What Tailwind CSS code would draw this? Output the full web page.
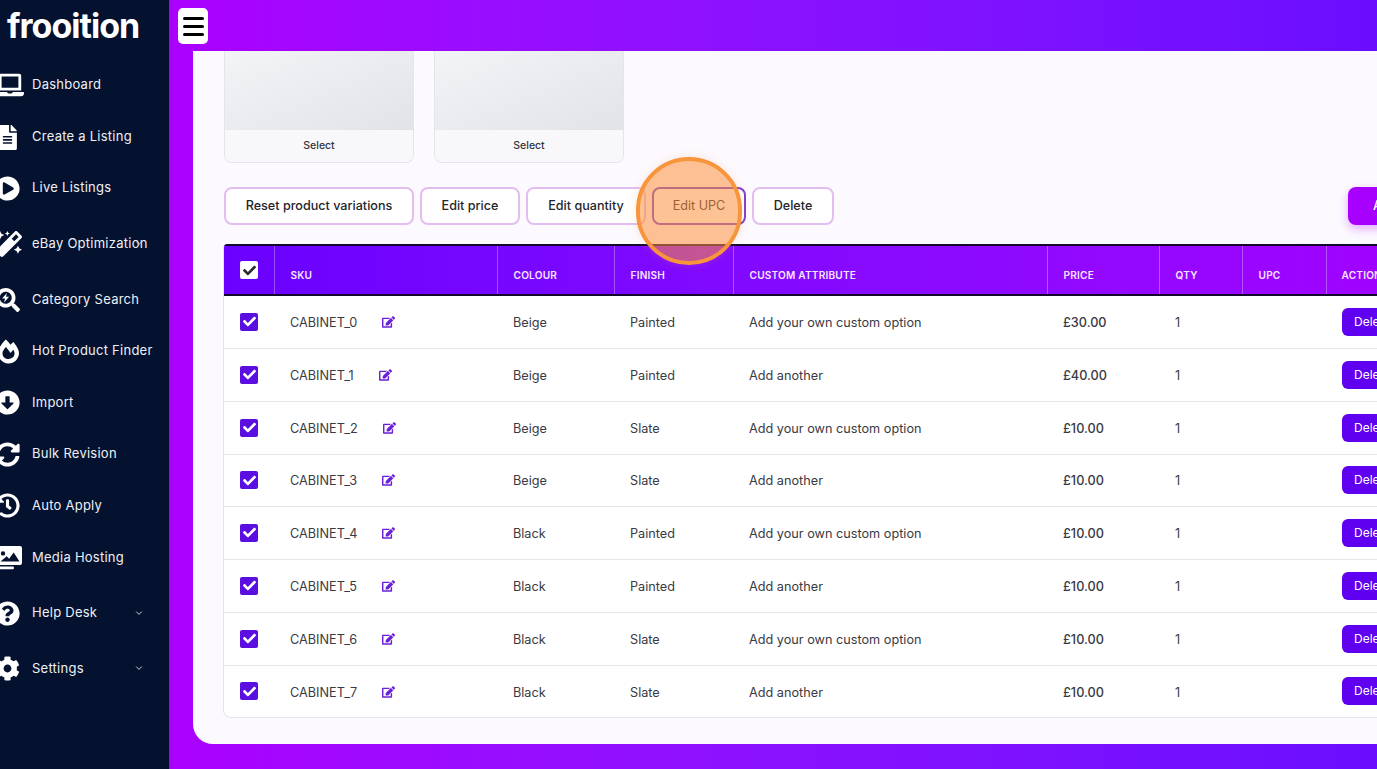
<!DOCTYPE html>
<html lang="en">
<head>
  <meta charset="UTF-8" />
  <meta name="viewport" content="width=device-width, initial-scale=1.0"/>
  <title>Product variations - Frooition</title>
  <script src="https://cdn.jsdelivr.net/npm/@tailwindcss/browser@4"></script>
</head>
<body class="h-screen overflow-hidden bg-[#04122f] font-['Inter',sans-serif]">
  <svg class="hidden">
    <symbol id="edit" viewBox="0 0 576 512"><path fill="currentColor" d="M402.6 83.2l90.2 90.2c3.8 3.8 3.8 10 0 13.8L274.4 405.6l-92.8 10.3c-12.4 1.4-22.9-9.1-21.5-21.5l10.3-92.8L388.8 83.2c3.8-3.8 10-3.8 13.8 0zm162-22.9l-48.8-48.8c-15.2-15.2-39.9-15.2-55.2 0l-35.4 35.4c-3.8 3.8-3.8 10 0 13.8l90.2 90.2c3.8 3.8 10 3.8 13.8 0l35.4-35.4c15.2-15.3 15.2-40 0-55.2zM384 346.2V448H64V128h229.8c3.2 0 6.2-1.3 8.5-3.5l40-40c7.6-7.6 2.2-20.5-8.5-20.5H48C21.5 64 0 85.5 0 112v352c0 26.5 21.5 48 48 48h352c26.5 0 48-21.5 48-48V306.2c0-10.7-12.9-16-20.5-8.5l-40 40c-2.2 2.3-3.5 5.3-3.5 8.5z"/></symbol>
    <symbol id="check" viewBox="0 0 512 512"><path fill="currentColor" d="M173.898 439.404l-166.4-166.4c-9.997-9.997-9.997-26.206 0-36.204l36.203-36.204c9.997-9.998 26.207-9.998 36.204 0L192 312.69 432.095 72.596c9.997-9.997 26.207-9.997 36.204 0l36.203 36.204c9.997 9.997 9.997 26.206 0 36.204l-294.4 294.401c-9.998 9.997-26.207 9.997-36.204-.001z"/></symbol>
    <symbol id="chev" viewBox="0 0 10 10"><path d="M1.5 3.2 5 6.8l3.5-3.6" fill="none" stroke="currentColor" stroke-width="1.2"/></symbol>
  </svg>

  <div class="flex h-full">
    <!-- sidebar -->
    <aside class="w-[169px] shrink-0 overflow-hidden bg-[#04122f] text-white">
      <div class="h-[59px] pl-[7px] pt-[6px] text-[34px] leading-[40px] font-bold tracking-[-1px]">frooition</div>
      <nav class="text-[13px] tracking-[0.25px] text-[#eef0f6]">
        <a class="relative flex h-[52px] items-center"><span class="w-[32px] shrink-0"><svg class="-ml-[4px] w-[28px] h-[24px]" viewBox="0 0 640 512"><path fill="#fff" d="M624 416H381.54c-.74 19.81-14.71 32-32.74 32H288c-18.69 0-33.02-17.47-32.77-32H16c-8.8 0-16 7.2-16 16v16c0 35.2 28.8 64 64 64h512c35.2 0 64-28.8 64-64v-16c0-8.8-7.2-16-16-16zM576 48c0-26.4-21.6-48-48-48H112C85.6 0 64 21.6 64 48v336h512V48zm-64 272H128V64h384v256z"/></svg></span>Dashboard</a>
        <a class="relative flex h-[52px] items-center"><span class="w-[32px] shrink-0"><svg class="-ml-[2px] w-[19px] h-[25px]" viewBox="0 0 384 512"><path fill="#fff" d="M224 136V0H24C10.7 0 0 10.7 0 24v464c0 13.3 10.7 24 24 24h336c13.3 0 24-10.7 24-24V160H248c-13.2 0-24-10.8-24-24zm64 236c0 6.6-5.4 12-12 12H108c-6.6 0-12-5.4-12-12v-8c0-6.6 5.4-12 12-12h168c6.6 0 12 5.4 12 12v8zm0-64c0 6.6-5.4 12-12 12H108c-6.6 0-12-5.4-12-12v-8c0-6.6 5.4-12 12-12h168c6.6 0 12 5.4 12 12v8zm0-72v8c0 6.6-5.4 12-12 12H108c-6.6 0-12-5.4-12-12v-8c0-6.6 5.4-12 12-12h168c6.6 0 12 5.4 12 12zm96-114.1v6.1H256V0h6.1c6.4 0 12.5 2.5 17 7l97.9 98c4.5 4.5 7 10.6 7 16.9z"/></svg></span>Create a Listing</a>
        <a class="relative flex h-[50px] items-center"><span class="w-[32px] shrink-0"><svg class="-ml-[5px] w-[25px] h-[25px]" viewBox="0 0 512 512"><path fill="#fff" d="M256 8C119 8 8 119 8 256s111 248 248 248 248-111 248-248S393 8 256 8zm115.7 272l-176 101c-15.8 8.8-35.7-2.5-35.7-21V152c0-18.4 19.8-29.8 35.7-21l176 107c16.4 9.2 16.4 32.9 0 42z"/></svg></span>Live Listings</a>
        <a class="relative flex h-[61px] items-center"><span class="w-[32px] shrink-0"><svg class="-ml-[4px] w-[26px] h-[26px]" viewBox="0 0 512 512"><path fill="#fff" d="M224 96l16-32 32-16-32-16-16-32-16 32-32 16 32 16 16 32zM80 160l26.66-53.33L160 80l-53.34-26.67L80 0 53.34 53.33 0 80l53.34 26.67L80 160zm352 128l-26.66 53.33L352 368l53.34 26.67L432 448l26.66-53.33L512 368l-53.34-26.67L432 288zm70.62-193.77L417.77 9.38C411.53 3.12 403.34 0 395.15 0c-8.19 0-16.38 3.12-22.63 9.38L9.38 372.52c-12.5 12.5-12.5 32.76 0 45.25l84.85 84.85c6.25 6.25 14.44 9.37 22.62 9.37 8.19 0 16.38-3.12 22.63-9.37l363.14-363.15c12.5-12.48 12.5-32.75 0-45.24zM359.45 203.46l-50.91-50.91 86.6-86.6 50.91 50.91-86.6 86.6z"/></svg></span>eBay Optimization<svg class="absolute left-[135px] top-[26px] w-[8px] h-[8px] text-[#cfd3de]"><use href="#chev"/></svg></a>
        <a class="relative flex h-[52px] items-center"><span class="w-[32px] shrink-0"><svg class="-ml-[4px] w-[24px] h-[24px]" viewBox="0 0 512 512"><path fill="#fff" d="M505 442.7L405.3 343c-4.5-4.5-10.6-7-17-7H372c27.6-35.3 44-79.7 44-128C416 93.1 322.9 0 208 0S0 93.1 0 208s93.1 208 208 208c48.3 0 92.7-16.4 128-44v16.3c0 6.4 2.5 12.5 7 17l99.7 99.7c9.4 9.4 24.6 9.4 33.9 0l28.3-28.3c9.4-9.4 9.4-24.6.1-34zM208 336c-70.7 0-128-57.2-128-128 0-70.7 57.2-128 128-128 70.7 0 128 57.2 128 128 0 70.7-57.2 128-128 128z"/><path fill="#fff" d="M232 105 130 225h62l-18 84 104-124h-64z"/></svg></span>Category Search</a>
        <a class="relative flex h-[50px] items-center"><span class="w-[32px] shrink-0"><svg class="-ml-[2px] w-[21px] h-[25px]" viewBox="0 0 448 512"><path fill="#fff" d="M323.56 51.2c-20.8 19.3-39.58 39.59-56.22 59.97C240.08 73.62 206.28 35.53 168 0 69.74 91.17 0 209.96 0 281.6 0 408.85 100.29 512 224 512s224-103.15 224-230.4c0-53.27-51.98-163.14-124.44-230.4zm-19.47 340.65C282.43 407.01 255.72 416 226.86 416 154.71 416 96 368.26 96 290.75c0-38.61 24.31-72.63 72.79-130.75 6.93 7.98 98.83 125.34 98.83 125.34l58.63-66.88c4.14 6.85 7.91 13.55 11.27 19.97 27.35 52.19 15.81 118.97-33.43 153.42z"/></svg></span>Hot Product Finder</a>
        <a class="relative flex h-[53px] items-center"><span class="w-[32px] shrink-0"><svg class="-ml-[5px] w-[25px] h-[25px]" viewBox="0 0 512 512"><path fill="#fff" d="M504 256c0 137-111 248-248 248S8 393 8 256 119 8 256 8s248 111 248 248zM212 140v116h-70.9c-10.7 0-16.1 13-8.5 20.5l114.9 114.3c4.7 4.7 12.2 4.7 16.9 0l114.9-114.3c7.6-7.6 2.2-20.5-8.5-20.5H300V140c0-6.6-5.4-12-12-12h-64c-6.6 0-12 5.4-12 12z"/></svg></span>Import</a>
        <a class="relative flex h-[50px] items-center"><span class="w-[32px] shrink-0"><svg class="-ml-[5px] w-[25px] h-[25px]" viewBox="0 0 512 512"><path fill="#fff" d="M370.72 133.28C339.458 104.008 298.888 87.962 255.848 88c-77.458.068-144.328 53.178-162.791 126.85-1.344 5.363-6.122 9.15-11.651 9.15H24.103c-7.498 0-13.194-6.807-11.807-14.176C33.933 94.924 134.813 8 256 8c66.448 0 126.791 26.136 171.315 68.685L463.03 40.97C478.149 25.851 504 36.559 504 57.941V192c0 13.255-10.745 24-24 24H345.941c-21.382 0-32.09-25.851-16.971-40.971l41.75-41.749zM32 296h134.059c21.382 0 32.09 25.851 16.971 40.971l-41.75 41.75c31.262 29.273 71.835 45.319 114.876 45.28 77.418-.07 144.315-53.144 162.787-126.849 1.344-5.363 6.122-9.15 11.651-9.15h57.304c7.498 0 13.194 6.807 11.807 14.176C478.067 417.076 377.187 504 256 504c-66.448 0-126.791-26.136-171.315-68.685L48.97 471.03C33.851 486.149 8 475.441 8 454.059V320c0-13.255 10.745-24 24-24z"/></svg></span>Bulk Revision</a>
        <a class="relative flex h-[53px] items-center"><span class="w-[32px] shrink-0"><svg class="-ml-[5px] w-[25px] h-[25px]" viewBox="0 0 512 512"><path fill="#fff" d="M504 255.531c.253 136.64-111.18 248.372-247.82 248.468-59.015.042-113.223-20.53-155.822-54.911-11.077-8.94-11.905-25.541-1.839-35.607l11.267-11.267c8.609-8.609 22.353-9.551 31.891-1.984C173.062 425.135 212.781 440 256 440c101.705 0 184-82.311 184-184 0-101.705-82.311-184-184-184-48.814 0-93.149 18.969-126.068 49.932l50.754 50.754c10.08 10.08 2.941 27.314-11.313 27.314H24c-8.837 0-16-7.163-16-16V38.627c0-14.254 17.234-21.393 27.314-11.314l49.372 49.372C129.209 34.136 189.552 8 256 8c136.81 0 247.747 110.78 248 247.531zm-180.912 78.784l9.823-12.63c8.138-10.463 6.253-25.542-4.21-33.679L288 256.349V152c0-13.255-10.745-24-24-24h-16c-13.255 0-24 10.745-24 24v135.651l65.409 50.874c10.463 8.137 25.541 6.253 33.679-4.21z"/></svg></span>Auto Apply</a>
        <a class="relative flex h-[52px] items-center"><span class="w-[32px] shrink-0"><svg class="-ml-[3px] w-[26px] h-[24px]" viewBox="0 0 26 24"><path fill="#fff" fill-rule="evenodd" d="M3 0h20a2 2 0 0 1 2 2v15a2 2 0 0 1-2 2H3a2 2 0 0 1-2-2V2a2 2 0 0 1 2-2zm3 5.2a2.2 2.2 0 1 0 0 4.4 2.2 2.2 0 0 0 0-4.4zM3.5 15.5h19l-5.8-9-4.6 6.2-2.4-2.4z"/><rect fill="#fff" x="0" y="20.5" width="17" height="2.8" rx="1.2"/></svg></span>Media Hosting</a>
        <a class="relative flex h-[58px] items-center"><span class="w-[32px] shrink-0"><svg class="-ml-[5px] w-[25px] h-[25px]" viewBox="0 0 512 512"><path fill="#fff" d="M504 256c0 136.997-111.043 248-248 248S8 392.997 8 256C8 119.083 119.043 8 256 8s248 111.083 248 248zM262.655 90c-54.497 0-89.255 22.957-116.549 63.758-3.536 5.286-2.353 12.415 2.715 16.258l34.699 26.31c5.205 3.947 12.621 3.008 16.665-2.122 17.864-22.658 30.113-35.797 57.303-35.797 20.429 0 45.698 13.148 45.698 32.958 0 14.976-12.363 22.667-32.534 33.976C247.128 238.528 216 254.941 216 296v4c0 6.627 5.373 12 12 12h56c6.627 0 12-5.373 12-12v-1.333c0-28.462 83.186-29.647 83.186-106.667 0-58.002-60.165-102-116.531-102zM256 338c-25.365 0-46 20.635-46 46 0 25.364 20.635 46 46 46s46-20.636 46-46c0-25.365-20.635-46-46-46z"/></svg></span>Help Desk<svg class="absolute left-[135px] top-[25px] w-[8px] h-[8px] text-[#cfd3de]"><use href="#chev"/></svg></a>
        <a class="relative flex h-[53px] items-center"><span class="w-[32px] shrink-0"><svg class="-ml-[5px] w-[25px] h-[25px]" viewBox="0 0 512 512"><path fill="#fff" d="M487.4 315.7l-42.6-24.6c4.3-23.2 4.3-47 0-70.2l42.6-24.6c4.9-2.8 7.1-8.6 5.5-14-11.1-35.6-30-67.8-54.7-94.6-3.8-4.1-10-5.1-14.8-2.3L380.8 110c-17.9-15.4-38.5-27.3-60.8-35.1V25.8c0-5.6-3.9-10.5-9.4-11.7-36.7-8.2-74.3-7.8-109.2 0-5.5 1.2-9.4 6.1-9.4 11.7V75c-22.2 7.9-42.8 19.8-60.8 35.1L88.7 85.5c-4.9-2.8-11-1.9-14.8 2.3-24.7 26.7-43.6 58.9-54.7 94.6-1.7 5.4.6 11.2 5.5 14L67.3 221c-4.3 23.2-4.3 47 0 70.2l-42.6 24.6c-4.9 2.8-7.1 8.6-5.5 14 11.1 35.6 30 67.8 54.7 94.6 3.8 4.1 10 5.1 14.8 2.3l42.6-24.6c17.9 15.4 38.5 27.3 60.8 35.1v49.2c0 5.6 3.9 10.5 9.4 11.7 36.7 8.2 74.3 7.8 109.2 0 5.5-1.2 9.4-6.1 9.4-11.7v-49.2c22.2-7.9 42.8-19.8 60.8-35.1l42.6 24.6c4.9 2.8 11 1.9 14.8-2.3 24.7-26.7 43.6-58.9 54.7-94.6 1.5-5.5-.7-11.3-5.6-14.1zM256 336c-44.1 0-80-35.9-80-80s35.9-80 80-80 80 35.9 80 80-35.9 80-80 80z"/></svg></span>Settings<svg class="absolute left-[135px] top-[22px] w-[8px] h-[8px] text-[#cfd3de]"><use href="#chev"/></svg></a>
      </nav>
    </aside>

    <!-- right side -->
    <div class="flex min-w-0 flex-1 flex-col bg-linear-to-r from-[#aa00ff] to-[#6a0dff]">
      <header class="h-[51px] shrink-0 pl-[9px] pt-[8px]">
        <button class="flex h-[36px] w-[30px] flex-col items-center justify-center gap-[5px] rounded-[5px] bg-white">
          <span class="h-[3px] w-[21px] rounded-full bg-black"></span>
          <span class="h-[3px] w-[21px] rounded-full bg-black"></span>
          <span class="h-[3px] w-[21px] rounded-full bg-black"></span>
        </button>
      </header>

      <main class="relative ml-[24px] mb-[25px] min-h-0 flex-1 overflow-hidden rounded-bl-[20px] bg-[#fcf9ff] pl-[31px]">
        <!-- image tiles, scrolled under the header -->
        <div class="flex gap-[20px]">
          <div class="w-[190px] overflow-hidden rounded-b-[8px] border border-t-0 border-[#e4e4ea]">
            <div class="h-[79px] bg-linear-to-br from-[#f3f4f6] to-[#e1e3e8]"></div>
            <div class="flex h-[32px] items-center justify-center bg-[#f8f8fb] text-[10.5px] font-medium text-[#33333a]">Select</div>
          </div>
          <div class="w-[190px] overflow-hidden rounded-b-[8px] border border-t-0 border-[#e4e4ea]">
            <div class="h-[79px] bg-linear-to-br from-[#f3f4f6] to-[#e1e3e8]"></div>
            <div class="flex h-[32px] items-center justify-center bg-[#f8f8fb] text-[10.5px] font-medium text-[#33333a]">Select</div>
          </div>
        </div>

        <!-- actions -->
        <div class="mt-[24px] flex w-[1254px] gap-[6px] text-[12.6px] font-medium text-[#25252b]">
          <button class="h-[38px] w-[190px] rounded-[8px] border-2 border-[#e4bdf0] bg-white">Reset product variations</button>
          <button class="h-[38px] w-[100px] rounded-[8px] border-2 border-[#e4bdf0] bg-white">Edit price</button>
          <button class="h-[38px] w-[120px] rounded-[8px] border-2 border-[#e4bdf0] bg-white">Edit quantity</button>
          <button class="h-[38px] w-[94px] rounded-[8px] border-2 border-[#7d3fd0] bg-white font-normal">Edit UPC</button>
          <button class="h-[38px] w-[82px] rounded-[8px] border-2 border-[#e4bdf0] bg-white">Delete</button>
          <button class="ml-auto h-[38px] w-[130px] rounded-[8px] bg-[#a800ff] text-white shadow-[0_4px_10px_rgba(168,0,255,0.3)]">Add variation</button>
        </div>

        <!-- variations table -->
        <div class="mt-[19px] -ml-[1px] w-[1254px] overflow-hidden rounded-b-[8px] rounded-t-[4px] border-x border-b border-[#e4e4ea] bg-white">
          <table class="w-full table-fixed border-collapse text-left text-[12.7px] text-[#3a3a42]">
            <colgroup>
              <col class="w-[50px]"><col class="w-[223px]"><col class="w-[117px]"><col class="w-[119px]"><col class="w-[314px]"><col class="w-[112px]"><col class="w-[83px]"><col class="w-[84px]"><col>
            </colgroup>
            <thead class="bg-linear-to-r from-[#6a00ff] to-[#a400ff] text-[10.1px] font-semibold tracking-[0.2px] text-[#f4e6ff] uppercase">
              <tr class="h-[50px] border-y-2 border-[#14082e]">
                <th class="border-r border-white/30 pl-[16px]"><span class="flex h-[18px] w-[18px] items-center justify-center rounded-[2px] bg-white text-[#2b2b33]"><svg class="h-[13px] w-[13px]"><use href="#check"/></svg></span></th>
                <th class="border-r border-white/30 pt-[12px] pl-[16px] font-semibold">SKU</th>
                <th class="border-r border-white/30 pt-[12px] pl-[16px] font-semibold">Colour</th>
                <th class="border-r border-white/30 pt-[12px] pl-[16px] font-semibold">Finish</th>
                <th class="border-r border-white/30 pt-[12px] pl-[16px] font-semibold">Custom attribute</th>
                <th class="border-r border-white/30 pt-[12px] pl-[16px] font-semibold">Price</th>
                <th class="border-r border-white/30 pt-[12px] pl-[16px] font-semibold">Qty</th>
                <th class="border-r border-white/30 pt-[12px] pl-[16px] font-semibold">UPC</th>
                <th class="pt-[12px] pl-[15px] font-semibold">Action</th>
              </tr>
            </thead>
            <tbody class="[&_td:nth-child(n+2):nth-child(-n+8)]:pt-[2px]">
              <tr class="h-[53px] border-b border-[#e4e4ea]">
                <td class="pl-[16px]"><span class="flex h-[18px] w-[18px] items-center justify-center rounded-[2px] bg-[#5a0fe0] text-white"><svg class="h-[13px] w-[13px]"><use href="#check"/></svg></span></td>
                <td class="pl-[16px]">CABINET_0<svg class="ml-[25px] inline h-[12px] w-[13px] align-[-1px] text-[#6a1fd8]"><use href="#edit"/></svg></td>
                <td class="pl-[16px]">Beige</td><td class="pl-[16px]">Painted</td><td class="pl-[16px]">Add your own custom option</td><td class="pl-[16px] font-medium">£30.00</td><td class="pl-[16px]">1</td><td></td>
                <td class="pl-[16px]"><button class="h-[28px] rounded-[6px] bg-[#5f00f0] px-[12px] text-[12px] text-white">Delete</button></td>
              </tr>
              <tr class="h-[53px] border-b border-[#e4e4ea]">
                <td class="pl-[16px]"><span class="flex h-[18px] w-[18px] items-center justify-center rounded-[2px] bg-[#5a0fe0] text-white"><svg class="h-[13px] w-[13px]"><use href="#check"/></svg></span></td>
                <td class="pl-[16px]">CABINET_1<svg class="ml-[25px] inline h-[12px] w-[13px] align-[-1px] text-[#6a1fd8]"><use href="#edit"/></svg></td>
                <td class="pl-[16px]">Beige</td><td class="pl-[16px]">Painted</td><td class="pl-[16px]">Add another</td><td class="pl-[16px] font-medium">£40.00</td><td class="pl-[16px]">1</td><td></td>
                <td class="pl-[16px]"><button class="h-[28px] rounded-[6px] bg-[#5f00f0] px-[12px] text-[12px] text-white">Delete</button></td>
              </tr>
              <tr class="h-[53px] border-b border-[#e4e4ea]">
                <td class="pl-[16px]"><span class="flex h-[18px] w-[18px] items-center justify-center rounded-[2px] bg-[#5a0fe0] text-white"><svg class="h-[13px] w-[13px]"><use href="#check"/></svg></span></td>
                <td class="pl-[16px]">CABINET_2<svg class="ml-[25px] inline h-[12px] w-[13px] align-[-1px] text-[#6a1fd8]"><use href="#edit"/></svg></td>
                <td class="pl-[16px]">Beige</td><td class="pl-[16px]">Slate</td><td class="pl-[16px]">Add your own custom option</td><td class="pl-[16px] font-medium">£10.00</td><td class="pl-[16px]">1</td><td></td>
                <td class="pl-[16px]"><button class="h-[28px] rounded-[6px] bg-[#5f00f0] px-[12px] text-[12px] text-white">Delete</button></td>
              </tr>
              <tr class="h-[52px] border-b border-[#e4e4ea]">
                <td class="pl-[16px]"><span class="flex h-[18px] w-[18px] items-center justify-center rounded-[2px] bg-[#5a0fe0] text-white"><svg class="h-[13px] w-[13px]"><use href="#check"/></svg></span></td>
                <td class="pl-[16px]">CABINET_3<svg class="ml-[25px] inline h-[12px] w-[13px] align-[-1px] text-[#6a1fd8]"><use href="#edit"/></svg></td>
                <td class="pl-[16px]">Beige</td><td class="pl-[16px]">Slate</td><td class="pl-[16px]">Add another</td><td class="pl-[16px] font-medium">£10.00</td><td class="pl-[16px]">1</td><td></td>
                <td class="pl-[16px]"><button class="h-[28px] rounded-[6px] bg-[#5f00f0] px-[12px] text-[12px] text-white">Delete</button></td>
              </tr>
              <tr class="h-[53px] border-b border-[#e4e4ea]">
                <td class="pl-[16px]"><span class="flex h-[18px] w-[18px] items-center justify-center rounded-[2px] bg-[#5a0fe0] text-white"><svg class="h-[13px] w-[13px]"><use href="#check"/></svg></span></td>
                <td class="pl-[16px]">CABINET_4<svg class="ml-[25px] inline h-[12px] w-[13px] align-[-1px] text-[#6a1fd8]"><use href="#edit"/></svg></td>
                <td class="pl-[16px]">Black</td><td class="pl-[16px]">Painted</td><td class="pl-[16px]">Add your own custom option</td><td class="pl-[16px] font-medium">£10.00</td><td class="pl-[16px]">1</td><td></td>
                <td class="pl-[16px]"><button class="h-[28px] rounded-[6px] bg-[#5f00f0] px-[12px] text-[12px] text-white">Delete</button></td>
              </tr>
              <tr class="h-[53px] border-b border-[#e4e4ea]">
                <td class="pl-[16px]"><span class="flex h-[18px] w-[18px] items-center justify-center rounded-[2px] bg-[#5a0fe0] text-white"><svg class="h-[13px] w-[13px]"><use href="#check"/></svg></span></td>
                <td class="pl-[16px]">CABINET_5<svg class="ml-[25px] inline h-[12px] w-[13px] align-[-1px] text-[#6a1fd8]"><use href="#edit"/></svg></td>
                <td class="pl-[16px]">Black</td><td class="pl-[16px]">Painted</td><td class="pl-[16px]">Add another</td><td class="pl-[16px] font-medium">£10.00</td><td class="pl-[16px]">1</td><td></td>
                <td class="pl-[16px]"><button class="h-[28px] rounded-[6px] bg-[#5f00f0] px-[12px] text-[12px] text-white">Delete</button></td>
              </tr>
              <tr class="h-[53px] border-b border-[#e4e4ea]">
                <td class="pl-[16px]"><span class="flex h-[18px] w-[18px] items-center justify-center rounded-[2px] bg-[#5a0fe0] text-white"><svg class="h-[13px] w-[13px]"><use href="#check"/></svg></span></td>
                <td class="pl-[16px]">CABINET_6<svg class="ml-[25px] inline h-[12px] w-[13px] align-[-1px] text-[#6a1fd8]"><use href="#edit"/></svg></td>
                <td class="pl-[16px]">Black</td><td class="pl-[16px]">Slate</td><td class="pl-[16px]">Add your own custom option</td><td class="pl-[16px] font-medium">£10.00</td><td class="pl-[16px]">1</td><td></td>
                <td class="pl-[16px]"><button class="h-[28px] rounded-[6px] bg-[#5f00f0] px-[12px] text-[12px] text-white">Delete</button></td>
              </tr>
              <tr class="h-[52px]">
                <td class="pl-[16px]"><span class="flex h-[18px] w-[18px] items-center justify-center rounded-[2px] bg-[#5a0fe0] text-white"><svg class="h-[13px] w-[13px]"><use href="#check"/></svg></span></td>
                <td class="pl-[16px]">CABINET_7<svg class="ml-[25px] inline h-[12px] w-[13px] align-[-1px] text-[#6a1fd8]"><use href="#edit"/></svg></td>
                <td class="pl-[16px]">Black</td><td class="pl-[16px]">Slate</td><td class="pl-[16px]">Add another</td><td class="pl-[16px] font-medium">£10.00</td><td class="pl-[16px]">1</td><td></td>
                <td class="pl-[16px]"><button class="h-[28px] rounded-[6px] bg-[#5f00f0] px-[12px] text-[12px] text-white">Delete</button></td>
              </tr>
            </tbody>
          </table>
        </div>

        <!-- highlight ring over the Edit UPC button -->
        <div class="absolute left-[443px] top-[106px] h-[108px] w-[106px] rounded-full border-[4px] border-[#f7943c] bg-[#fb923c]/55 shadow-[0_0_10px_rgba(247,148,60,0.2)]"></div>
      </main>
    </div>
  </div>
</body>
</html>
